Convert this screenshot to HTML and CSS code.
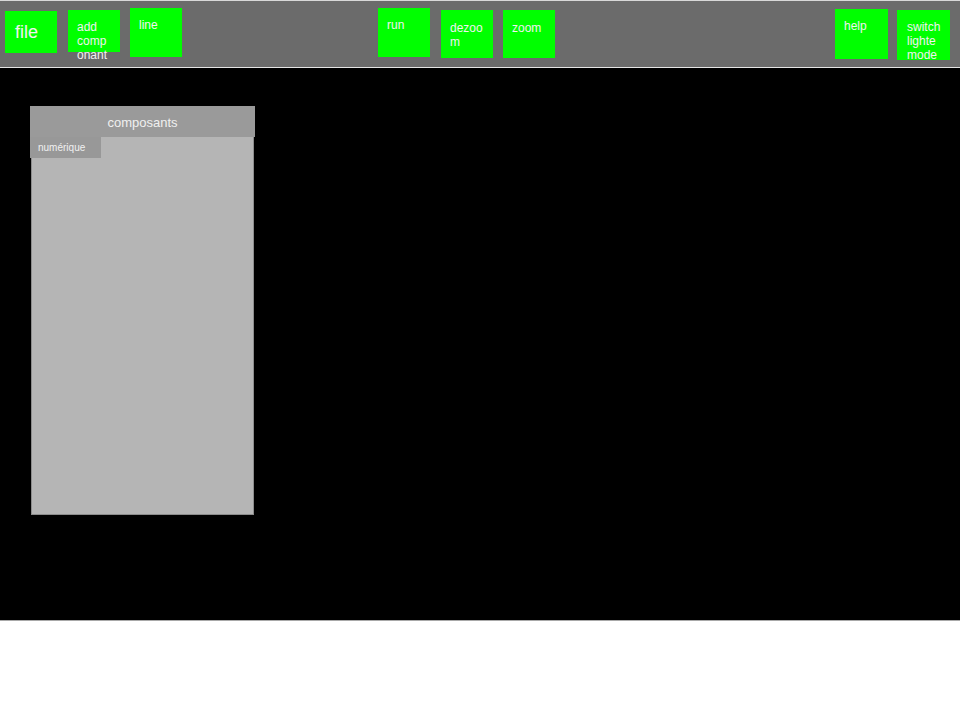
FILE: index.html
```html
<!DOCTYPE html>
<html>
<head>
<meta charset="utf-8">
<link rel="stylesheet" href="styles.css">
</head>
<body>
<div class="toolbar">
  <div class="btn btn-file">file</div>
  <div class="btn btn-add">add componant</div>
  <div class="btn btn-line">line</div>
  <div class="btn btn-run">run</div>
  <div class="btn btn-dezoom">dezoom</div>
  <div class="btn btn-zoom">zoom</div>
  <div class="spacer"></div>
  <div class="btn btn-help">help</div>
  <div class="btn btn-switch">switch lighte mode</div>
</div>
<div class="canvas">
  <div class="panel">
    <div class="panel-header">composants</div>
    <div class="panel-body">
      <div class="tab">numérique</div>
    </div>
  </div>
</div>
</body>
</html>
```
FILE: styles.css
```css
html, body {
  margin: 0;
  padding: 0;
  background: #ffffff;
  font-family: "Liberation Sans", Arial, sans-serif;
}
.toolbar {
  display: flex;
  align-items: flex-start;
  height: 66px;
  background: #6b6b6b;
  border-top: 1px solid #d8d8d8;
  border-bottom: 1px solid #e6e6e6;
  box-sizing: content-box;
}
.btn {
  flex: none;
  box-sizing: border-box;
  width: 52px;
  padding: 10px 9px 0 9px;
  background: #00ff00;
  color: #f2f2f2;
  font-size: 12px;
  line-height: 14px;
  overflow-wrap: anywhere;
}
.btn-file { margin: 10px 0 0 5px; height: 42px; font-size: 18px; line-height: 21px; padding-top: 11px; padding-left: 10px; }
.btn-add { margin: 9px 0 0 11px; height: 42px; }
.btn-line { margin: 7px 0 0 10px; height: 49px; }
.btn-run { margin: 7px 0 0 196px; height: 49px; }
.btn-dezoom { margin: 9px 0 0 11px; height: 48px; padding-top: 11px; }
.btn-zoom { margin: 9px 0 0 10px; height: 48px; padding-top: 11px; }
.spacer { flex: 1; }
.btn-help { margin: 8px 0 0 0; height: 50px; width: 53px; }
.btn-switch { margin: 9px 10px 0 9px; height: 50px; width: 53px; padding-left: 10px; }
.canvas {
  height: 553px;
  background: #000000;
  border-bottom: 1px solid #a8a8a8;
  padding: 38px 0 0 30px;
  box-sizing: border-box;
}
.panel {
  width: 225px;
}
.panel-header {
  height: 31px;
  background: #9a9a9a;
  color: #f0f0f0;
  font-size: 13px;
  line-height: 34px;
  text-align: center;
}
.panel-body {
  height: 377px;
  margin: 0 1px;
  background: #b5b5b5;
  border: 1px solid #8c8c8c;
  border-top: none;
}
.tab {
  width: 71px;
  height: 21px;
  margin-left: -2px;
  box-sizing: border-box;
  padding-left: 8px;
  background: #989898;
  color: #f0f0f0;
  font-size: 10px;
  line-height: 21px;
}
```
